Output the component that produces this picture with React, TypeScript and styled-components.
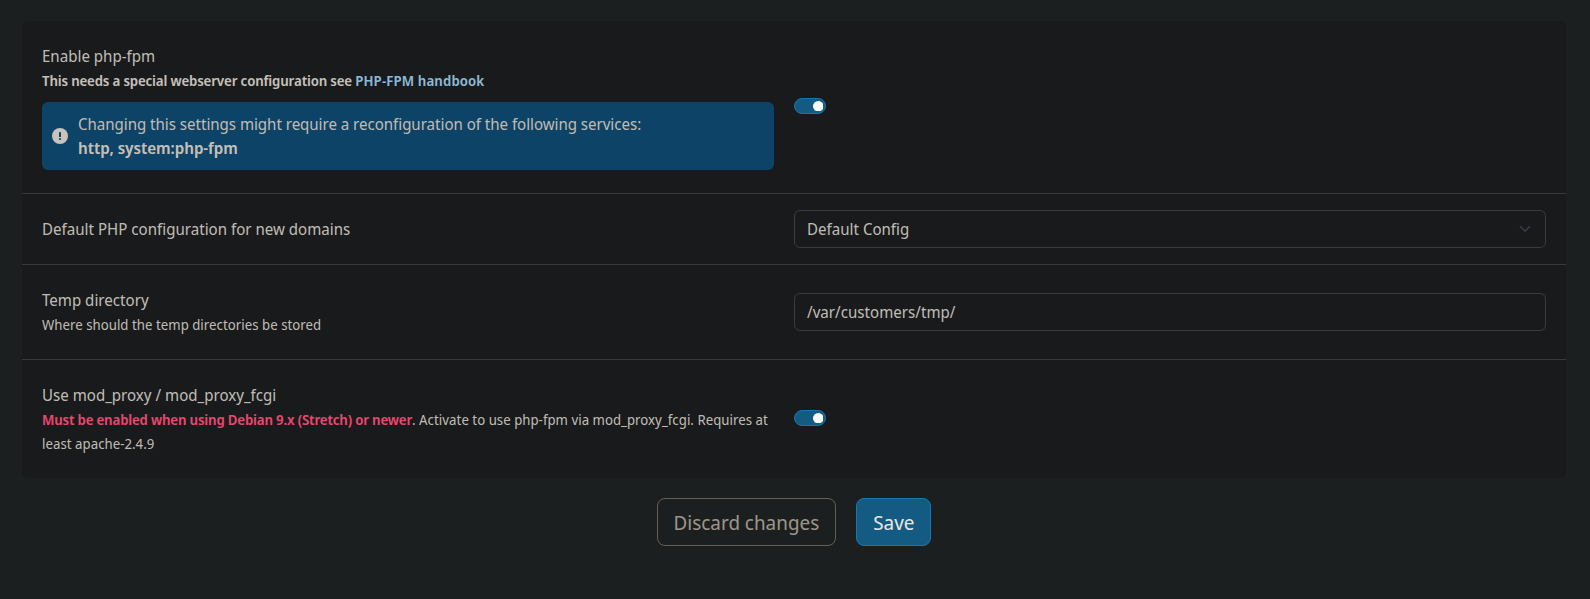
import React from 'react';
import styled, { createGlobalStyle } from 'styled-components';

const fontStack = '"Noto Sans Display", "Noto Sans", sans-serif';

const GlobalStyle = createGlobalStyle`
  * { box-sizing: border-box; }
  body {
    margin: 0;
    min-height: 100vh;
    background: #1b1f20;
    color: #bfbab2;
    font: 400 16px/24px ${fontStack};
  }
`;

const Page = styled.main`
  padding: 21px 24px 0 22px;
`;

const Panel = styled.section`
  background: #191a1c;
  border-radius: 6px;
`;

const Row = styled.div`
  display: grid;
  grid-template-columns: 732px 752px;
  column-gap: 20px;
  align-items: center;
  padding: 16px 20px;
  border-bottom: 1px solid #373b3d;
  &:last-child { border-bottom: 0; }
`;

const Label = styled.div`
  padding: 7px 0;
`;

const HintLine = styled.div`
  line-height: 24px;
`;

const Small = styled.small`
  font-size: 14px;
  line-height: 21px;
  letter-spacing: 0.03px;
`;

const Strong = styled.strong<{ $danger?: boolean }>`
  font-weight: 600;
  color: ${(p) => (p.$danger ? '#e8476f' : '#c4bfb7')};
  ${Small} & { letter-spacing: -0.16px; }
`;

const Link = styled.a`
  color: #8bb9d6;
  letter-spacing: 0.12px;
  text-decoration: none;
`;

const Alert = styled.div`
  display: flex;
  align-items: center;
  gap: 10px;
  margin-top: 10px;
  padding: 10px;
  border-radius: 6px;
  background: #0d4367;
  letter-spacing: -0.04px;
`;

const Switch = styled.button`
  display: flex;
  justify-content: flex-end;
  align-items: center;
  width: 32px;
  height: 16px;
  margin: 3px 0 5px;
  padding: 0 1.7px;
  border: 1px solid #1a74a8;
  border-radius: 8px;
  background: #145b84;
`;

const Knob = styled.svg`
  width: 10.6px;
  height: 10.6px;
  fill: #fff;
`;

const Field = styled.div`
  display: flex;
  align-items: center;
  justify-content: space-between;
  height: 38px;
  padding: 0 12px;
  border: 1px solid #393c3e;
  border-radius: 6px;
`;

const Input = styled.input`
  width: 100%;
  padding: 0;
  border: 0;
  outline: 0;
  background: transparent;
  color: inherit;
  font: inherit;
`;

const Actions = styled.div`
  display: flex;
  justify-content: center;
  gap: 20px;
  padding-top: 20px;
`;

const Button = styled.button<{ $primary?: boolean }>`
  height: 48px;
  padding: 9px 16px 7px;
  border: 1px solid ${(p) => (p.$primary ? '#1a78b0' : '#665f54')};
  border-radius: 8px;
  background: ${(p) => (p.$primary ? '#145b84' : 'transparent')};
  color: ${(p) => (p.$primary ? '#e8e6e3' : '#9d9488')};
  font: 400 20px/30px ${fontStack};
`;

const InfoIcon = () => (
  <svg width="16" height="16" viewBox="0 0 16 16">
    <circle cx="8" cy="8" r="8" fill="#c8c3bc" />
    <rect x="7" y="4" width="2" height="5" rx=".6" fill="#0d4367" />
    <circle cx="8" cy="11" r="1.1" fill="#0d4367" />
  </svg>
);

const Chevron = () => (
  <svg width="16" height="12" viewBox="0 0 16 16">
    <path d="m2 5 6 6 6-6" fill="none" stroke="#393f45" strokeWidth="2" strokeLinecap="round" strokeLinejoin="round" />
  </svg>
);

const Toggle = ({ label }: { label: string }) => (
  <Switch role="switch" aria-checked="true" aria-label={label}>
    <Knob viewBox="0 0 10 10">
      <circle cx="5" cy="5" r="5" />
    </Knob>
  </Switch>
);

export default function App() {
  return (
    <>
      <GlobalStyle />
      <Page>
        <Panel>
          <Row>
            <Label>
              Enable php-fpm
              <HintLine>
                <Small>
                  <Strong>
                    This needs a special webserver configuration see <Link href="#">PHP-FPM handbook</Link>
                  </Strong>
                </Small>
              </HintLine>
              <Alert>
                <InfoIcon />
                <div>
                  Changing this settings might require a reconfiguration of the following services:
                  <br />
                  <Strong>http, system:php-fpm</Strong>
                </div>
              </Alert>
            </Label>
            <Toggle label="Enable php-fpm" />
          </Row>
          <Row>
            <Label>Default PHP configuration for new domains</Label>
            <Field>
              Default Config
              <Chevron />
            </Field>
          </Row>
          <Row>
            <Label>
              Temp directory
              <HintLine>
                <Small>Where should the temp directories be stored</Small>
              </HintLine>
            </Label>
            <Field>
              <Input defaultValue="/var/customers/tmp/" />
            </Field>
          </Row>
          <Row>
            <Label>
              Use mod_proxy / mod_proxy_fcgi
              <HintLine>
                <Small>
                  <Strong $danger>Must be enabled when using Debian 9.x (Stretch) or newer</Strong>. Activate to use
                  php-fpm via mod_proxy_fcgi. Requires at least apache-2.4.9
                </Small>
              </HintLine>
            </Label>
            <Toggle label="Use mod_proxy / mod_proxy_fcgi" />
          </Row>
        </Panel>
        <Actions>
          <Button>Discard changes</Button>
          <Button $primary>Save</Button>
        </Actions>
      </Page>
    </>
  );
}
